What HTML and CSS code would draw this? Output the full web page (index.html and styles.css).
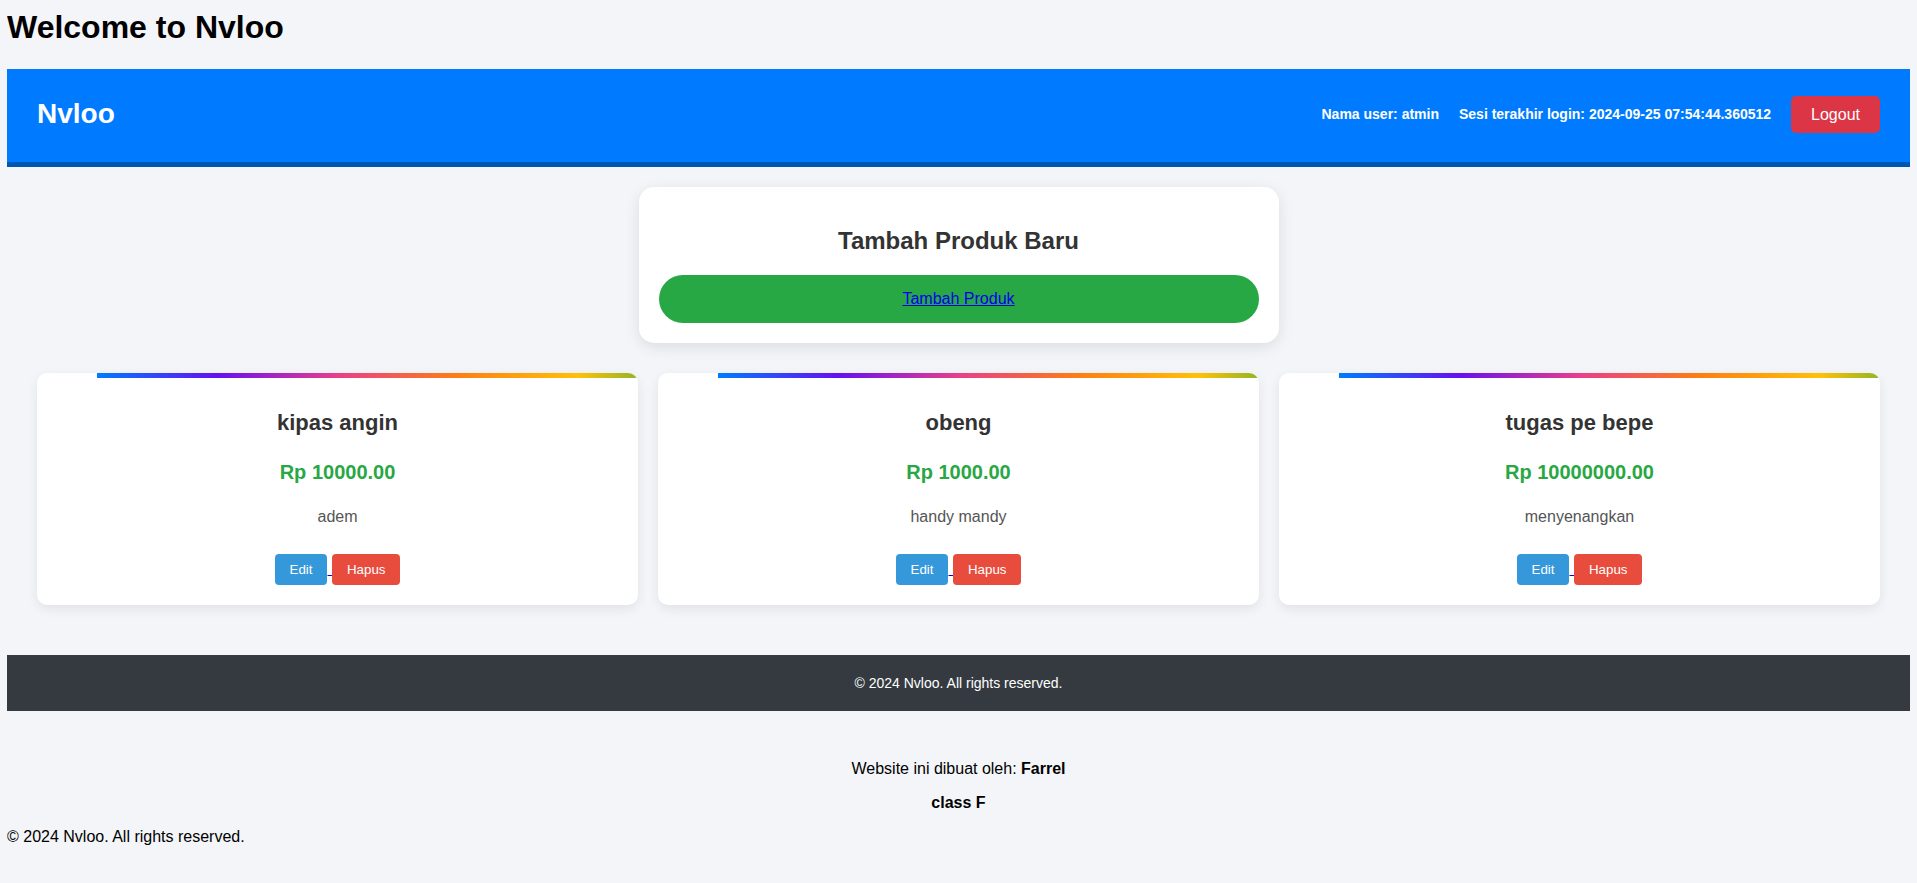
FILE: index.html
```html
<!DOCTYPE html>
<html lang="id">
<head>
<meta charset="utf-8">
<title>Nvloo</title>
<link rel="stylesheet" href="styles.css">
</head>
<body>
<h1 class="page-title">Welcome to Nvloo</h1>
<header class="topbar">
  <div class="brand">Nvloo</div>
  <div class="user-info">
    <span class="info">Nama user: atmin</span>
    <span class="info">Sesi terakhir login: 2024-09-25 07:54:44.360512</span>
    <button class="logout">Logout</button>
  </div>
</header>
<main>
  <section class="add-card">
    <h2>Tambah Produk Baru</h2>
    <div class="add-btn"><a href="#">Tambah Produk</a></div>
  </section>
  <section class="products">
    <div class="product-card">
      <h3 class="name">kipas angin</h3>
      <p class="price">Rp 10000.00</p>
      <p class="desc">adem</p>
      <div class="actions"><a href="#" class="edit-link"><button class="btn btn-edit">Edit</button> </a><button class="btn btn-delete">Hapus</button></div>
    </div>
    <div class="product-card">
      <h3 class="name">obeng</h3>
      <p class="price">Rp 1000.00</p>
      <p class="desc">handy mandy</p>
      <div class="actions"><a href="#" class="edit-link"><button class="btn btn-edit">Edit</button> </a><button class="btn btn-delete">Hapus</button></div>
    </div>
    <div class="product-card">
      <h3 class="name">tugas pe bepe</h3>
      <p class="price">Rp 10000000.00</p>
      <p class="desc">menyenangkan</p>
      <div class="actions"><a href="#" class="edit-link"><button class="btn btn-edit">Edit</button> </a><button class="btn btn-delete">Hapus</button></div>
    </div>
  </section>
</main>
<footer class="site-footer">© 2024 Nvloo. All rights reserved.</footer>
<div class="credits">
  <p>Website ini dibuat oleh: <strong>Farrel</strong></p>
  <p><strong>class F</strong></p>
</div>
<p class="copyright">© 2024 Nvloo. All rights reserved.</p>
</body>
</html>
```
FILE: styles.css
```css
body {
  margin: 8px 7px;
  background: #f4f5f9;
  font-family: "Liberation Sans", Arial, sans-serif;
  font-size: 16px;
  color: #000;
}

.page-title {
  font-size: 32px;
  font-weight: bold;
  margin: 1px 0 23px;
  line-height: 36.8px;
}

.topbar {
  display: flex;
  align-items: center;
  justify-content: space-between;
  background: #007bff;
  border-bottom: 5px solid #0056b3;
  padding: 27px 30px 29px;
  color: #fff;
}

.brand {
  font-size: 28px;
  font-weight: bold;
}

.user-info {
  display: flex;
  align-items: center;
  gap: 20px;
}

.info {
  font-size: 14px;
  font-weight: bold;
}

.logout {
  background: #dc3545;
  color: #fff;
  border: none;
  border-radius: 5px;
  font-family: "Liberation Sans", Arial, sans-serif;
  font-size: 16px;
  line-height: 17px;
  padding: 10px 20px;
}

.add-card {
  width: 600px;
  margin: 20px auto 0;
  padding: 20px;
  background: #fff;
  border-radius: 15px;
  box-shadow: 0 4px 15px rgba(0, 0, 0, 0.1);
  text-align: center;
}

.add-card h2 {
  margin: 20px 0;
  font-size: 24px;
  color: #333;
}

.add-btn {
  background: #28a745;
  border-radius: 25px;
  padding: 15px;
  text-align: center;
}

.add-btn a {
  color: #0000ee;
  text-decoration: underline;
}

.products {
  display: grid;
  grid-template-columns: repeat(3, 1fr);
  gap: 20px;
  padding: 30px;
}

.product-card {
  position: relative;
  overflow: hidden;
  background: #fff;
  border-radius: 10px;
  padding: 20px;
  text-align: center;
  box-shadow: 0 4px 12px rgba(0, 0, 0, 0.08);
}

.product-card::before {
  content: "";
  position: absolute;
  top: 0;
  left: 10%;
  width: 100%;
  height: 5px;
  background: linear-gradient(90deg, #007bff, #6610f2, #e83e8c, #fd7e14, #ffc107, #28a745);
}

.name {
  margin: 17px 0 0;
  font-size: 22px;
  line-height: 26px;
  color: #333;
}

.price {
  margin: 25px 0 0;
  font-size: 20px;
  line-height: 23px;
  font-weight: bold;
  color: #28a745;
}

.desc {
  margin: 24px 0 0;
  line-height: 18.4px;
  color: #555;
}

.actions {
  margin-top: 28px;
  text-align: center;
}

.edit-link {
  color: #0000ee;
  text-decoration: underline;
}

.btn {
  border: none;
  border-radius: 4px;
  color: #fff;
  font-family: "Liberation Sans", Arial, sans-serif;
  font-size: 13.333px;
  padding: 8px 15px;
}

.btn-edit {
  background: #3498db;
}

.btn-delete {
  background: #e74c3c;
}

.site-footer {
  margin-top: 20px;
  background: #343a40;
  color: #fff;
  padding: 20px;
  text-align: center;
  font-size: 14px;
}

.credits {
  margin-top: 49px;
  text-align: center;
}

.credits p {
  margin: 16px 0;
}

.copyright {
  margin: 16px 0;
}
```
